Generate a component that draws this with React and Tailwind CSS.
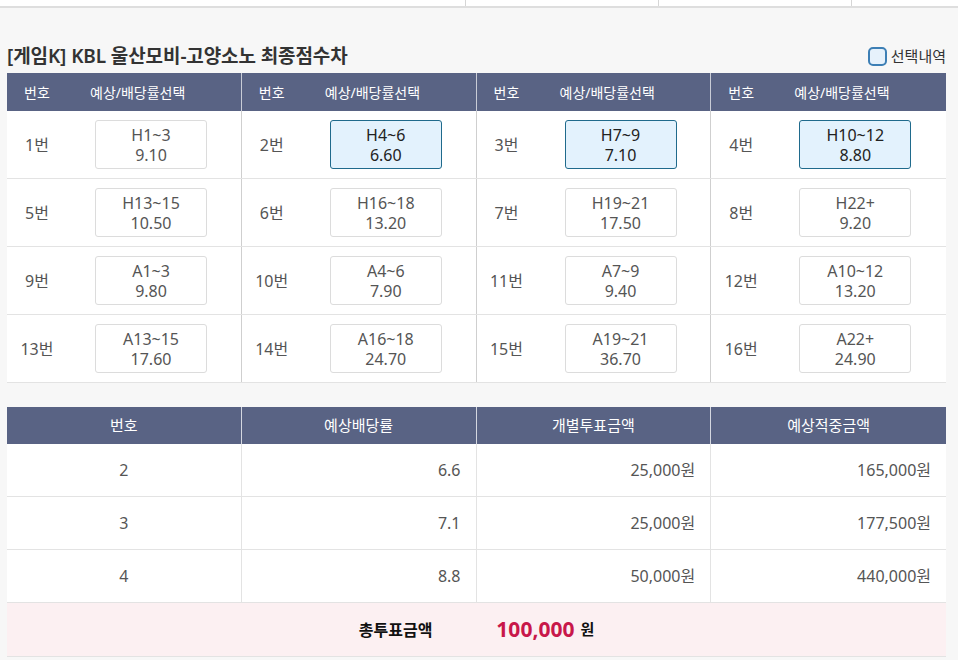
import { useState } from 'react'

const PICKS = [
  ['H1~3', '9.10'], ['H4~6', '6.60'], ['H7~9', '7.10'], ['H10~12', '8.80'],
  ['H13~15', '10.50'], ['H16~18', '13.20'], ['H19~21', '17.50'], ['H22+', '9.20'],
  ['A1~3', '9.80'], ['A4~6', '7.90'], ['A7~9', '9.40'], ['A10~12', '13.20'],
  ['A13~15', '17.60'], ['A16~18', '24.70'], ['A19~21', '36.70'], ['A22+', '24.90'],
]

const SLIP = [
  { no: 2, odds: '6.6', stake: '25,000원', win: '165,000원' },
  { no: 3, odds: '7.1', stake: '25,000원', win: '177,500원' },
  { no: 4, odds: '8.8', stake: '50,000원', win: '440,000원' },
]

const font = { fontFamily: '"Noto Sans", "Noto Sans CJK KR", sans-serif' }

export default function App() {
  const [selected] = useState([1, 2, 3])

  // 16 picks laid out in 4 rows of 4 groups
  const rows = [0, 1, 2, 3].map(r => PICKS.slice(r * 4, r * 4 + 4))

  return (
    <div className="min-h-[660px] bg-[#f7f7f7] text-[#555]" style={font}>
      {/* top tab strip */}
      <div className="h-[8px] bg-white border-b-2 border-[#dedede] flex">
        <div className="w-[466px] border-r border-[#d6d6d6]" />
        <div className="w-[193px] border-r border-[#d6d6d6]" />
        <div className="w-[193px] border-r border-[#d6d6d6]" />
      </div>

      <div className="pl-[7px] pr-[12px]">
        {/* title */}
        <div className="flex items-center justify-between h-[34px] mt-[31px]">
          <h2 className="text-[19px] font-semibold text-[#333] tracking-[-0.1px]">
            [게임K] KBL 울산모비-고양소노 최종점수차
          </h2>
          <label className="flex items-center gap-[4px] text-[15px] text-[#333]">
            <span className="w-[19px] h-[19px] rounded-[5px] border-2 border-[#3d7fb5] bg-[#e6f1fb]" />
            선택내역
          </label>
        </div>

        {/* pick grid */}
        <div className="bg-white">
          <div className="grid grid-cols-4 bg-[#596384] text-white text-[14px] h-[38px]">
            {[0, 1, 2, 3].map(g => (
              <div key={g} className={`flex items-center ${g < 3 ? 'border-r border-[#c9ccd6]' : ''}`}>
                <span className="w-[60px] text-center">번호</span>
                <span className="pl-[23px]">예상/배당률선택</span>
              </div>
            ))}
          </div>
          {rows.map((row, r) => (
            <div key={r} className="grid grid-cols-4 h-[68px] border-b border-[#e3e3e3]">
              {row.map(([label, odds], g) => {
                const idx = r * 4 + g
                const on = selected.includes(idx)
                return (
                  <div key={idx} className={`flex items-center ${g < 3 ? 'border-r border-[#cfcfcf]' : ''}`}>
                    <span className="w-[60px] text-center text-[16px] text-[#555]">{idx + 1}번</span>
                    <button
                      className={`ml-[28px] w-[112px] h-[49px] rounded-[3px] border text-center text-[16px] leading-[20px] ${
                        on ? 'bg-[#e3f2fd] border-[#1f6a8c] text-[#222]' : 'bg-white border-[#dcdcdc] text-[#555]'
                      }`}
                    >
                      {label}<br />{odds}
                    </button>
                  </div>
                )
              })}
            </div>
          ))}
        </div>

        {/* bet slip */}
        <div className="mt-[24px] bg-white">
          <div className="grid grid-cols-4 h-[37px] bg-[#596384] text-white text-[15px]">
            {['번호', '예상배당률', '개별투표금액', '예상적중금액'].map((h, i) => (
              <div key={h} className={`flex items-center justify-center ${i < 3 ? 'border-r border-[#d4d7e0]' : ''}`}>
                {h}
              </div>
            ))}
          </div>
          {SLIP.map(s => (
            <div key={s.no} className="grid grid-cols-4 h-[53px] border-b border-[#e3e3e3] text-[16px] text-[#555]">
              <div className="flex items-center justify-center border-r border-[#e3e3e3]">{s.no}</div>
              <div className="flex items-center justify-end pr-[15px] border-r border-[#e3e3e3]">{s.odds}</div>
              <div className="flex items-center justify-end pr-[15px] border-r border-[#e3e3e3]">{s.stake}</div>
              <div className="flex items-center justify-end pr-[15px]">{s.win}</div>
            </div>
          ))}
          <div className="h-[54px] bg-[#fcf0f2] border-b border-[#e3e3e3] flex items-center justify-center">
            <span className="text-[16px] font-bold text-[#111]">총투표금액</span>
            <span className="ml-[64px] text-[21px] font-bold text-[#c8174a]">100,000</span>
            <span className="ml-[6px] text-[15px] font-bold text-[#111]">원</span>
          </div>
        </div>
      </div>
    </div>
  )
}
